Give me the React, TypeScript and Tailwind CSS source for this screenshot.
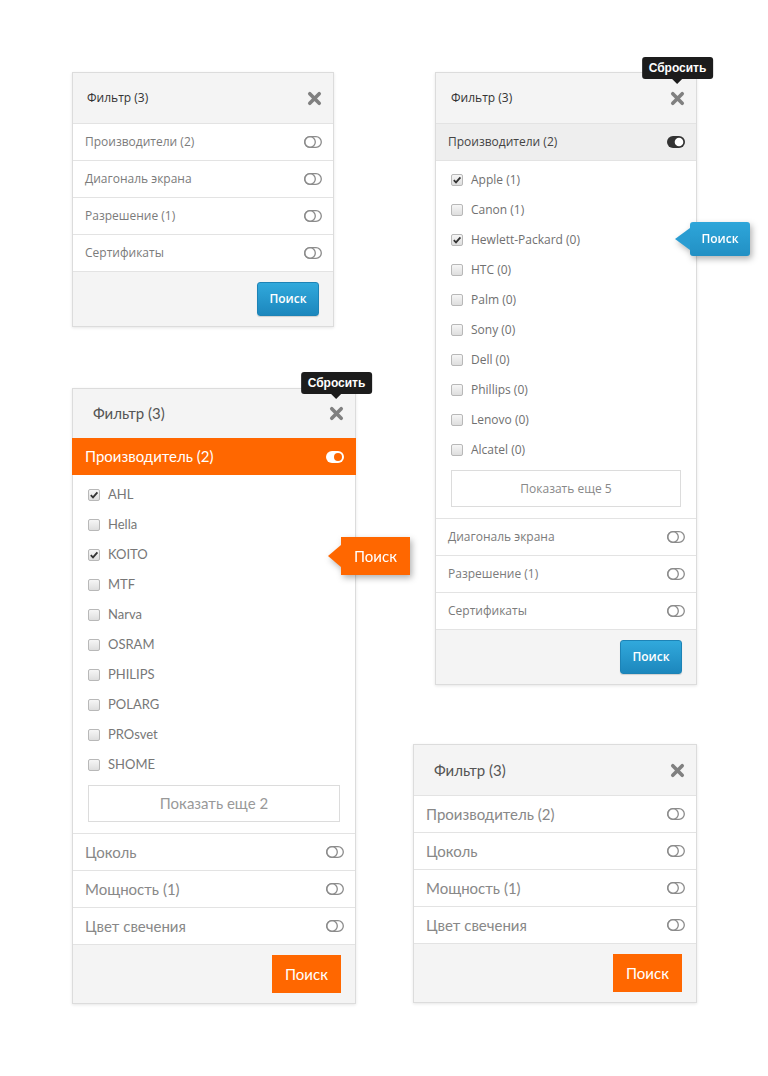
import React from "react";

type Kind = "blue" | "orange";

const styles = {
  blue: {
    font: "font-['Open_Sans',sans-serif]",
    title: "text-[12px] text-[#333]",
    row: "text-[12px] text-[#7b7b7b]",
    item: "text-[12px] text-[#707070]",
    more: "text-[12px] text-[#888]",
  },
  orange: {
    font: "font-['Lato',sans-serif]",
    title: "text-[15px] text-[#555]",
    row: "text-[15px] text-[#888]",
    item: "text-[13px] text-[#777]",
    more: "text-[15px] text-[#999]",
  },
};

function Toggle({ mode }: { mode: "off" | "dark" | "orange" }) {
  if (mode === "dark") {
    return (
      <svg width="18" height="12" viewBox="0 0 18 12">
        <rect x="0" y="0" width="18" height="12" rx="6" fill="#333" />
        <circle cx="12" cy="6" r="4.3" fill="#fff" />
      </svg>
    );
  }
  if (mode === "orange") {
    return (
      <svg width="18" height="12" viewBox="0 0 18 12">
        <rect x="0" y="0" width="18" height="12" rx="6" fill="#fff" />
        <circle cx="12" cy="6" r="4" fill="#ff6700" />
      </svg>
    );
  }
  return (
    <svg width="18" height="12" viewBox="0 0 18 12">
      <rect x="0.7" y="0.7" width="16.6" height="10.6" rx="5.3" fill="none" stroke="#8c8c8c" strokeWidth="1.3" />
      <circle cx="6" cy="6" r="5.3" fill="none" stroke="#8c8c8c" strokeWidth="1.3" />
    </svg>
  );
}

function CloseIcon() {
  return (
    <svg width="15" height="15" viewBox="0 0 14 14">
      <path d="M2.6 2.6L11.4 11.4M11.4 2.6L2.6 11.4" stroke="#808080" strokeWidth="3.4" strokeLinecap="round" />
    </svg>
  );
}

function Checkbox({ checked }: { checked: boolean }) {
  return (
    <span className="flex h-[12px] w-[12px] shrink-0 items-center justify-center rounded-[2px] border border-[#b8b8b8] bg-gradient-to-b from-[#f6f6f6] to-[#dedede]">
      {checked && (
        <svg width="10" height="10" viewBox="0 0 10 10">
          <path d="M1.8 5.2L4 7.4L8.4 2.4" fill="none" stroke="#333" strokeWidth="1.8" />
        </svg>
      )}
    </span>
  );
}

function Tooltip() {
  return (
    <div className="absolute bottom-full left-1/2 mb-[12px] -translate-x-1/2 whitespace-nowrap rounded-[3px] bg-[#1c1c1c] px-[7px] py-[3px] font-['Liberation_Sans',sans-serif] text-[12px] font-bold leading-[16px] text-white">
      Сбросить
      <span className="absolute left-1/2 top-full h-0 w-0 -translate-x-1/2 border-x-[5px] border-t-[5px] border-x-transparent border-t-[#1c1c1c]" />
    </div>
  );
}

function Callout({ kind }: { kind: Kind }) {
  if (kind === "blue") {
    return (
      <div className="absolute left-[224px] top-[-3px] flex items-center drop-shadow-[2px_3px_3px_rgba(0,0,0,0.3)]">
        <span className="h-0 w-0 border-y-[11px] border-r-[15px] border-y-transparent border-r-[#2a9dd2]" />
        <span className="flex h-[34px] w-[60px] items-center justify-center rounded-[3px] bg-gradient-to-b from-[#2ea6da] to-[#2290c4] font-['Open_Sans',sans-serif] text-[12px] font-semibold text-white">
          Поиск
        </span>
      </div>
    );
  }
  return (
    <div className="absolute left-[240px] top-[-3px] flex items-center drop-shadow-[2px_3px_3px_rgba(0,0,0,0.3)]">
      <span className="h-0 w-0 border-y-[11px] border-r-[13px] border-y-transparent border-r-[#ff6700]" />
      <span className="flex h-[38px] w-[69px] items-center justify-center bg-[#ff6700] font-['Lato',sans-serif] text-[15px] text-white">
        Поиск
      </span>
    </div>
  );
}

function SearchButton({ kind }: { kind: Kind }) {
  if (kind === "blue") {
    return (
      <button className="h-[34px] w-[62px] rounded-[3px] border border-[#1d83b6] bg-gradient-to-b from-[#31a9dc] to-[#1c87bd] text-[12px] font-semibold text-white shadow-[0_1px_1px_rgba(0,0,0,0.15)]">
        Поиск
      </button>
    );
  }
  return <button className="h-[38px] w-[69px] bg-[#ff6700] text-[15px] text-white">Поиск</button>;
}

type Item = { name: string; checked?: boolean; callout?: boolean };

function Panel({
  kind,
  width,
  titlePad,
  tooltip,
  before,
  open,
  items,
  more,
  after,
}: {
  kind: Kind;
  width: string;
  titlePad: string;
  tooltip?: boolean;
  before: string[];
  open?: string;
  items?: Item[];
  more?: string;
  after: string[];
}) {
  const s = styles[kind];
  const row = (label: string) => (
    <div key={label} className="flex h-[37px] items-center justify-between border-b border-[#e3e3e3] pl-[12px] pr-[11px]">
      <span className={s.row}>{label}</span>
      <Toggle mode="off" />
    </div>
  );
  const orangeOpen = kind === "orange" && !!open;
  return (
    <div className={`${width} ${s.font} relative border border-[#dcdcdc] bg-white shadow-[0_1px_3px_rgba(0,0,0,0.1)]`}>
      {/* Header */}
      <div
        className={`flex items-center justify-between bg-[#f4f4f4] pr-[11px] ${titlePad} ${
          orangeOpen ? "h-[49px]" : "h-[51px] border-b border-[#e3e3e3]"
        }`}
      >
        <span className={s.title}>Фильтр (3)</span>
        <div className="relative flex">
          <CloseIcon />
          {tooltip && <Tooltip />}
        </div>
      </div>

      {before.map(row)}

      {open && (
        <>
          {kind === "blue" ? (
            <div className="flex h-[37px] items-center justify-between border-b border-[#e3e3e3] bg-[#eeeeee] pl-[12px] pr-[11px]">
              <span className="text-[12px] text-[#444]">{open}</span>
              <Toggle mode="dark" />
            </div>
          ) : (
            <div className="-mx-px flex h-[37px] items-center justify-between bg-[#ff6700] pl-[13px] pr-[12px]">
              <span className="text-[15px] text-white">{open}</span>
              <Toggle mode="orange" />
            </div>
          )}
          <div className={`border-b border-[#e3e3e3] px-[15px] pb-[11px] ${kind === "orange" ? "pt-[5px]" : "pt-[4px]"}`}>
            {items?.map((it) => (
              <div key={it.name} className="relative flex h-[30px] items-center gap-[8px]">
                <Checkbox checked={!!it.checked} />
                <span className={s.item}>{it.name}</span>
                {it.callout && <Callout kind={kind} />}
              </div>
            ))}
            <div className={`mt-[5px] flex h-[37px] items-center justify-center border border-[#dcdcdc] ${s.more}`}>{more}</div>
          </div>
        </>
      )}

      {after.map(row)}

      {/* Footer */}
      <div className={`flex items-center justify-end bg-[#f4f4f4] pr-[14px] ${kind === "blue" ? "h-[54px]" : "h-[58px]"}`}>
        <SearchButton kind={kind} />
      </div>
    </div>
  );
}

export default function App() {
  return (
    <div className="min-h-[1076px] w-[768px] bg-white">
      <div className="flex justify-between pl-[72px] pr-[71px] pt-[72px]">
        {/* Left column */}
        <div className="flex w-[284px] flex-col items-start gap-[61px]">
          <Panel
            kind="blue"
            width="w-[262px]"
            titlePad="pl-[14px]"
            before={["Производители (2)", "Диагональ экрана", "Разрешение (1)", "Сертификаты"]}
            after={[]}
          />
          <Panel
            kind="orange"
            width="w-[284px]"
            titlePad="pl-[20px]"
            tooltip
            before={[]}
            open="Производитель (2)"
            items={[
              { name: "AHL", checked: true },
              { name: "Hella" },
              { name: "KOITO", checked: true, callout: true },
              { name: "MTF" },
              { name: "Narva" },
              { name: "OSRAM" },
              { name: "PHILIPS" },
              { name: "POLARG" },
              { name: "PROsvet" },
              { name: "SHOME" },
            ]}
            more="Показать еще 2"
            after={["Цоколь", "Мощность (1)", "Цвет свечения"]}
          />
        </div>

        {/* Right column */}
        <div className="flex w-[284px] flex-col items-end gap-[59px]">
          <Panel
            kind="blue"
            width="w-[262px]"
            titlePad="pl-[15px]"
            tooltip
            before={[]}
            open="Производители (2)"
            items={[
              { name: "Apple (1)", checked: true },
              { name: "Canon (1)" },
              { name: "Hewlett-Packard (0)", checked: true, callout: true },
              { name: "HTC (0)" },
              { name: "Palm (0)" },
              { name: "Sony (0)" },
              { name: "Dell (0)" },
              { name: "Phillips (0)" },
              { name: "Lenovo (0)" },
              { name: "Alcatel (0)" },
            ]}
            more="Показать еще 5"
            after={["Диагональ экрана", "Разрешение (1)", "Сертификаты"]}
          />
          <Panel
            kind="orange"
            width="w-[284px]"
            titlePad="pl-[20px]"
            before={["Производитель (2)", "Цоколь", "Мощность (1)", "Цвет свечения"]}
            after={[]}
          />
        </div>
      </div>
    </div>
  );
}
